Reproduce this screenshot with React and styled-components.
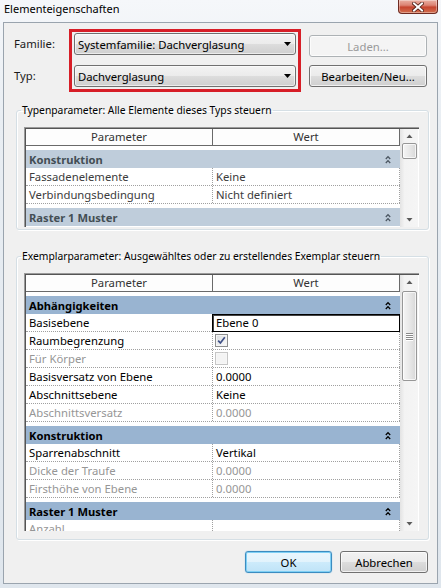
import React from 'react';
import styled, { createGlobalStyle } from 'styled-components';

const GlobalStyle = createGlobalStyle`
  html, body { margin: 0; padding: 0; }
  body {
    background: #e4ebf2;
    font-family: "Noto Sans", "Open Sans", sans-serif;
    font-size: 11.3px;
    color: #000;
  }
  * { box-sizing: border-box; }
`;

const Window = styled.div`
  width: 441px;
  height: 588px;
  display: flex;
  flex-direction: column;
  overflow: hidden;
  background: linear-gradient(180deg, #f5f7fa 0%, #e9eef3 20%, #dfe6ed 100%);
`;

const TitleBar = styled.div`
  height: 22px;
  flex: none;
  display: flex;
  align-items: flex-start;
  justify-content: space-between;
  padding: 0 3px 0 4px;
`;

const Title = styled.div`
  line-height: 18px;
  font-size: 11px;
  color: #000;
`;

const CloseButton = styled.div`
  width: 40px;
  height: 14px;
  border: 1px solid #6e2b22;
  border-top: none;
  border-radius: 0 0 4px 4px;
  background: linear-gradient(180deg, #eab0a2 0%, #dc8474 40%, #c6452f 55%, #d3704f 100%);
  box-shadow: inset 0 0 0 1px rgba(255, 255, 255, 0.35);
  display: flex;
  align-items: center;
  justify-content: center;
`;

const Client = styled.div`
  flex: 1;
  margin: 0 3px 4px;
  border: 1px solid #9aa4ae;
  background: #f0f0f0;
  display: flex;
  flex-direction: column;
`;

const TopArea = styled.div`
  height: 69px;
  flex: none;
  display: flex;
  padding: 6px 0 0 10px;
`;

const LabelColumn = styled.div`
  width: 55px;
  display: flex;
  flex-direction: column;
  gap: 10px;
  padding-top: 4px;
`;

const FieldLabel = styled.div`
  height: 22px;
  line-height: 22px;
  color: #1a1a1a;
`;

const Highlight = styled.div`
  width: 232px;
  height: 63px;
  border: 3px solid #d71e27;
  padding: 1px 2px 2px;
  display: flex;
  flex-direction: column;
  gap: 10px;
`;

const Combo = styled.div`
  height: 22px;
  border: 1px solid #707070;
  border-radius: 3px;
  background: linear-gradient(180deg, #f3f3f3 0%, #ebebeb 50%, #dddddd 51%, #cfcfcf 100%);
  box-shadow: inset 0 0 0 1px rgba(255, 255, 255, 0.6);
  display: flex;
  align-items: center;
  justify-content: space-between;
  padding: 0 4px 0 3px;
  white-space: nowrap;
`;

const ButtonColumn = styled.div`
  width: 118px;
  margin-left: 8px;
  padding-top: 6px;
  display: flex;
  flex-direction: column;
  gap: 8px;
`;

const Button = styled.div`
  height: 22px;
  width: ${p => (p.$w ? `${p.$w}px` : '100%')};
  border: 1px solid ${p => (p.$disabled ? '#adb2b5' : p.$default ? '#3c8cc0' : '#707070')};
  border-radius: 3px;
  background: ${p =>
    p.$disabled
      ? '#f4f4f4'
      : p.$default
      ? 'linear-gradient(180deg, #eaf6fd 0%, #e2f3fc 50%, #cdebfb 51%, #bfe3f7 100%)'
      : 'linear-gradient(180deg, #f2f2f2 0%, #ebebeb 50%, #dddddd 51%, #cfcfcf 100%)'};
  box-shadow: ${p =>
    p.$default
      ? 'inset 0 0 0 1px #7fd0f5, 0 0 1px #5db4e6'
      : 'inset 0 0 0 1px rgba(255, 255, 255, 0.7)'};
  color: ${p => (p.$disabled ? '#9a9a9a' : '#000')};
  display: flex;
  align-items: center;
  justify-content: center;
  white-space: nowrap;
`;

const GroupBox = styled.fieldset`
  margin: ${p => p.$mt}px 8px 0 12px;
  padding: 9px 9px ${p => p.$pb}px 7px;
  border: 1px solid #d5dfe5;
  border-radius: 3px;
  box-shadow: inset 1px 1px 0 #fff, 1px 1px 0 #fff;
  min-width: 0;
  flex: none;
`;

const Legend = styled.legend`
  padding: 0 1px;
  margin-left: -3px;
  line-height: 16px;
  font-size: 10.3px;
  white-space: nowrap;
  color: #000;
`;

const GridFrame = styled.div`
  height: ${p => p.$h}px;
  border-top: 1px solid #9a9a9a;
  border-left: 1px solid #9a9a9a;
  display: flex;
`;

const GridBody = styled.div`
  flex: 1;
  min-width: 0;
  display: flex;
  border-top: 1px solid #555;
  border-left: 1px solid #555;
  background: #fff;
`;

const Table = styled.div`
  width: 374px;
  flex: none;
  display: flex;
  flex-direction: column;
  overflow: hidden;
  color: ${p => (p.$active ? '#000' : '#3c3c3c')};
`;

const HeaderRow = styled.div`
  height: 17px;
  flex: none;
  display: grid;
  grid-template-columns: 187px 1fr;
`;

const HeaderCell = styled.div`
  border-right: 1px solid #6a6a6a;
  border-bottom: 1px solid #6a6a6a;
  background: #fdfdfd;
  text-align: center;
  line-height: 15px;
  color: #333;
`;

const GroupRow = styled.div`
  margin-top: 4px;
  height: 18px;
  flex: none;
  display: flex;
  align-items: center;
  justify-content: space-between;
  padding: 0 9px 0 3px;
  background: ${p => (p.$active ? '#99b4d1' : '#bfcddb')};
  color: ${p => (p.$active ? '#000' : '#434e54')};
  font-weight: bold;
  font-size: 11.2px;
  white-space: nowrap;
`;

const DataRow = styled.div`
  height: 18px;
  flex: none;
  display: grid;
  grid-template-columns: 187px 1fr;
  border-bottom: 1px dotted #a0a0a0;
`;

const Cell = styled.div`
  padding-left: 3px;
  line-height: 17px;
  white-space: nowrap;
  overflow: hidden;
  color: ${p => (p.$disabled ? '#969696' : 'inherit')};
  border-right: 1px dotted #a0a0a0;
  display: flex;
  align-items: center;
`;

const EditCell = styled.div`
  margin-left: -1px;
  height: 18px;
  margin-bottom: -1px;
  border: 1px solid #000;
  box-shadow: inset 1px 1px 0 #444;
  padding-left: 3px;
  line-height: 15px;
  background: #fff;
  white-space: nowrap;
`;

const CheckBox = styled.span`
  width: 13px;
  height: 13px;
  margin-left: -1px;
  border: 1px solid ${p => (p.$disabled ? '#c6c6c6' : '#8e8f8f')};
  background: ${p => (p.$disabled ? '#f4f4f4' : 'linear-gradient(135deg, #d9dcdf 0%, #f6f6f6 80%)')};
  box-shadow: inset 0 0 0 1px ${p => (p.$disabled ? '#f7f7f7' : '#f4f4f4')};
  display: flex;
  align-items: center;
  justify-content: center;
`;

const ScrollBar = styled.div`
  width: 18px;
  flex: none;
  display: flex;
  flex-direction: column;
  align-items: center;
  background: linear-gradient(90deg, #e3e3e3 0%, #f3f3f3 25%, #f5f5f5 100%);
`;

const ScrollArrow = styled.div`
  height: ${p => p.$h}px;
  width: 100%;
  flex: none;
  display: flex;
  align-items: center;
  justify-content: center;
`;

const Track = styled.div`
  flex: 1;
  width: 100%;
  display: flex;
  flex-direction: column;
  align-items: center;
`;

const Thumb = styled.div`
  width: 15px;
  height: ${p => p.$h}px;
  margin-top: ${p => p.$top}px;
  border: 1px solid #979797;
  border-radius: 2px;
  background: linear-gradient(90deg, #f5f5f5 0%, #e8e8e8 50%, #d8d8d8 100%);
  box-shadow: inset 0 0 0 1px rgba(255, 255, 255, 0.7);
  display: flex;
  flex-direction: column;
  align-items: center;
  justify-content: center;
  gap: 1px;
`;

const Grip = styled.span`
  width: 7px;
  height: 1px;
  background: #8a8a8a;
  box-shadow: 0 1px 0 #fff;
`;

const ButtonRow = styled.div`
  margin: 11px 9px 0 0;
  display: flex;
  justify-content: flex-end;
  gap: 8px;
`;

const CloseIcon = () => (
  <svg width="12" height="10" viewBox="0 0 12 10">
    <path d="M2 1.5 L10 8.5 M10 1.5 L2 8.5" stroke="#4a1a12" strokeWidth="3.6" strokeLinecap="square" />
    <path d="M2 1.5 L10 8.5 M10 1.5 L2 8.5" stroke="#fff" strokeWidth="2" strokeLinecap="square" />
  </svg>
);

const DropArrow = () => (
  <svg width="7" height="4" viewBox="0 0 7 4">
    <polygon points="0,0 7,0 3.5,4" fill="#000" />
  </svg>
);

const Chevrons = ({ color }) => (
  <svg width="6" height="9" viewBox="0 0 6 9">
    <path d="M0.8 4 L3 1.6 L5.2 4 M0.8 8 L3 5.6 L5.2 8" stroke={color} strokeWidth="1.3" fill="none" />
  </svg>
);

const ArrowGlyph = ({ up }) => (
  <svg width="7" height="4" viewBox="0 0 7 4">
    <polygon points={up ? '0.5,4 6.5,4 3.5,0.5' : '0.5,0 6.5,0 3.5,3.5'} fill="#5a5a5a" />
  </svg>
);

const Check = () => (
  <svg width="9" height="9" viewBox="0 0 9 9">
    <path d="M1.2 4.6 L3.4 7 L7.8 1.2" stroke="#3d4f86" strokeWidth="1.7" fill="none" />
  </svg>
);

const typeRows = [
  { group: 'Konstruktion' },
  { name: 'Fassadenelemente', value: 'Keine' },
  { name: 'Verbindungsbedingung', value: 'Nicht definiert' },
  { group: 'Raster 1 Muster' },
];

const instanceRows = [
  { group: 'Abhängigkeiten' },
  { name: 'Basisebene', value: 'Ebene 0', editing: true },
  { name: 'Raumbegrenzung', check: true },
  { name: 'Für Körper', check: false, disabled: true },
  { name: 'Basisversatz von Ebene', value: '0.0000' },
  { name: 'Abschnittsebene', value: 'Keine' },
  { name: 'Abschnittsversatz', value: '0.0000', disabled: true },
  { group: 'Konstruktion' },
  { name: 'Sparrenabschnitt', value: 'Vertikal' },
  { name: 'Dicke der Traufe', value: '0.0000', disabled: true },
  { name: 'Firsthöhe von Ebene', value: '0.0000', disabled: true },
  { group: 'Raster 1 Muster' },
  { name: 'Anzahl', value: '', disabled: true },
];

function ValueContent({ row }) {
  if (row.editing) return <EditCell>{row.value}</EditCell>;
  if (row.check !== undefined) {
    return (
      <Cell $disabled={row.disabled}>
        <CheckBox $disabled={row.disabled}>{row.check && <Check />}</CheckBox>
      </Cell>
    );
  }
  return <Cell $disabled={row.disabled}>{row.value}</Cell>;
}

function PropertyGrid({ rows, active, height, thumbTop, thumbHeight, grip }) {
  return (
    <GridFrame $h={height}>
      <GridBody>
        <Table $active={active}>
          <HeaderRow>
            <HeaderCell>Parameter</HeaderCell>
            <HeaderCell>Wert</HeaderCell>
          </HeaderRow>
          {rows.map((row, i) =>
            row.group ? (
              <GroupRow key={i} $active={active}>
                <span>{row.group}</span>
                <Chevrons color={active ? '#000' : '#4a5560'} />
              </GroupRow>
            ) : (
              <DataRow key={i}>
                <Cell $disabled={row.disabled}>{row.name}</Cell>
                <ValueContent row={row} />
              </DataRow>
            )
          )}
        </Table>
        <ScrollBar>
          <ScrollArrow $h={14}>
            <ArrowGlyph up />
          </ScrollArrow>
          <Track>
            <Thumb $top={thumbTop} $h={thumbHeight}>
              {grip && (
                <>
                  <Grip />
                  <Grip />
                  <Grip />
                  <Grip />
                </>
              )}
            </Thumb>
          </Track>
          <ScrollArrow $h={15}>
            <ArrowGlyph />
          </ScrollArrow>
        </ScrollBar>
      </GridBody>
    </GridFrame>
  );
}

export default function App() {
  return (
    <>
      <GlobalStyle />
      <Window>
        <TitleBar>
          <Title>Elementeigenschaften</Title>
          <CloseButton>
            <CloseIcon />
          </CloseButton>
        </TitleBar>
        <Client>
          <TopArea>
            <LabelColumn>
              <FieldLabel>Familie:</FieldLabel>
              <FieldLabel>Typ:</FieldLabel>
            </LabelColumn>
            <Highlight>
              <Combo>
                <span>Systemfamilie: Dachverglasung</span>
                <DropArrow />
              </Combo>
              <Combo>
                <span>Dachverglasung</span>
                <DropArrow />
              </Combo>
            </Highlight>
            <ButtonColumn>
              <Button $disabled>Laden...</Button>
              <Button>Bearbeiten/Neu...</Button>
            </ButtonColumn>
          </TopArea>

          <GroupBox $mt={10} $pb={2}>
            <Legend>Typenparameter: Alle Elemente dieses Typs steuern</Legend>
            <PropertyGrid rows={typeRows} height={100} thumbTop={0} thumbHeight={16} />
          </GroupBox>

          <GroupBox $mt={18} $pb={8}>
            <Legend>Exemplarparameter: Ausgewähltes oder zu erstellendes Exemplar steuern</Legend>
            <PropertyGrid rows={instanceRows} active height={258} thumbTop={2} thumbHeight={90} grip />
          </GroupBox>

          <ButtonRow>
            <Button $default $w={87}>OK</Button>
            <Button $w={88}>Abbrechen</Button>
          </ButtonRow>
        </Client>
      </Window>
    </>
  );
}
